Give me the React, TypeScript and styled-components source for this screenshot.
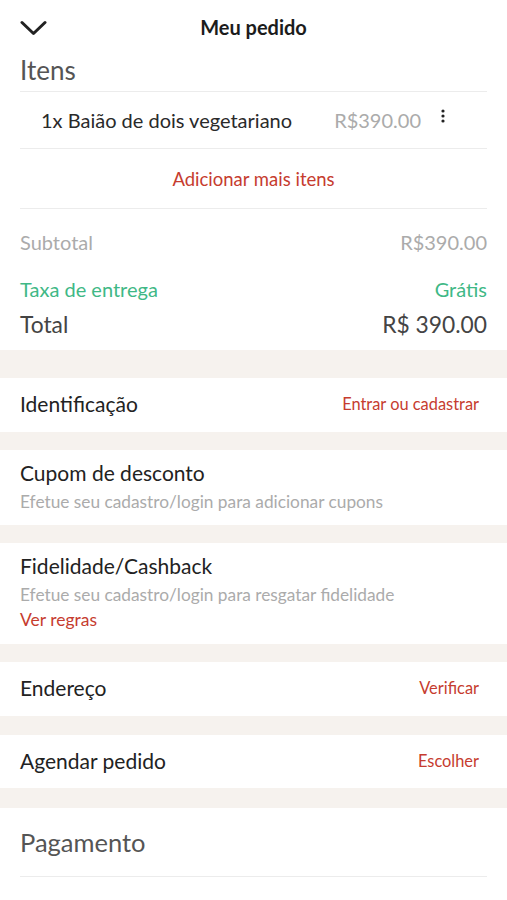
import React from "react";
import styled, { createGlobalStyle } from "styled-components";

const GlobalStyle = createGlobalStyle`
  html, body { margin: 0; padding: 0; background: #fff; }
  body { font-family: Lato, "Noto Sans", sans-serif; color: #2a2a2a; -webkit-font-smoothing: antialiased; }
  * { box-sizing: border-box; }
`;

const RED = "#c63c2f";
const GREEN = "#3fb886";
const GRAY = "#ababab";
const BAND = "#f6f2ee";

const Page = styled.div`
  width: 507px;
  height: 900px;
  overflow: hidden;
  background: #fff;
  display: flex;
  flex-direction: column;
`;

const Header = styled.header`
  height: 56px;
  flex: none;
  display: grid;
  grid-template-columns: 60px 1fr 60px;
  align-items: center;
  padding: 0 0 0 20px;
`;

const BackButton = styled.button`
  border: 0;
  background: none;
  padding: 0;
  width: 28px;
  height: 20px;
  display: flex;
  align-items: center;
  justify-content: flex-start;
  cursor: pointer;
`;

const HeaderTitle = styled.h1`
  margin: 0;
  text-align: center;
  font-size: 20px;
  font-weight: 700;
  color: #1c1c1c;
  transform: translateX(-10px) translateY(-1px);
`;

const Section = styled.section`
  padding: 0 20px;
  flex: none;
`;

const SectionTitle = styled.h2<{ $h: number; $size: number; $pb: number }>`
  margin: 0;
  height: ${(p) => p.$h}px;
  padding-bottom: ${(p) => p.$pb}px;
  display: flex;
  align-items: center;
  font-size: ${(p) => p.$size}px;
  font-weight: 400;
  color: #555;
`;

const Divider = styled.div`
  height: 1px;
  background: #ececec;
`;

const ItemRow = styled.div`
  height: 56px;
  display: flex;
  align-items: center;
  padding: 0 0 0 21px;
`;

const ItemName = styled.span`
  flex: 1;
  font-size: 20px;
  color: #2a2a2a;
`;

const ItemPrice = styled.span`
  font-size: 20px;
  color: ${GRAY};
`;

const MenuDots = styled.span`
  width: 66px;
  display: flex;
  justify-content: flex-start;
  padding-left: 20px;
  margin-top: -8px;
`;

const AddRow = styled.div`
  height: 59px;
  display: flex;
  align-items: center;
  justify-content: center;
  font-size: 18.5px;
  color: ${RED};
`;

const Totals = styled.div`
  padding: 15px 0 20px;
  display: flex;
  flex-direction: column;
`;

const TotalLine = styled.div<{ $color: string; $size: number; $h: number }>`
  height: ${(p) => p.$h}px;
  display: flex;
  align-items: center;
  justify-content: space-between;
  color: ${(p) => p.$color};
  font-size: ${(p) => p.$size}px;
`;

const Band = styled.div<{ $h: number }>`
  height: ${(p) => p.$h}px;
  background: ${BAND};
  flex: none;
`;

const Row = styled.div<{ $h: number }>`
  height: ${(p) => p.$h}px;
  flex: none;
  display: flex;
  align-items: center;
  justify-content: space-between;
  padding: 0 28px 3px 20px;
`;

const RowLabel = styled.span`
  font-size: 21px;
  color: #222;
`;

const RowAction = styled.span`
  font-size: 16.4px;
  color: ${RED};
`;

const Block = styled.div<{ $h: number }>`
  height: ${(p) => p.$h}px;
  flex: none;
  display: flex;
  flex-direction: column;
  justify-content: flex-start;
  padding: 10px 20px 0;
`;

const BlockTitle = styled.div`
  font-size: 21px;
  color: #222;
  line-height: 26px;
`;

const BlockSub = styled.div`
  font-size: 17.3px;
  color: ${GRAY};
  line-height: 22px;
  margin-top: 5px;
`;

const BlockLink = styled.div`
  font-size: 17.5px;
  color: ${RED};
  line-height: 22px;
  margin-top: 3px;
`;

const PayRow = styled.div`
  height: 46px;
  flex: none;
  display: flex;
  align-items: flex-end;
  justify-content: space-between;
  padding: 0 28px 0 20px;
`;

export default function App() {
  return (
    <Page>
      <GlobalStyle />
      <Header>
        <BackButton aria-label="Voltar">
          <svg width="27" height="16" viewBox="0 0 27 16">
            <path d="M2 2.5 L13.5 13.5 L25 2.5" fill="none" stroke="#222" strokeWidth="3" strokeLinecap="round" strokeLinejoin="round" />
          </svg>
        </BackButton>
        <HeaderTitle>Meu pedido</HeaderTitle>
        <span />
      </Header>

      <Section>
        <SectionTitle $h={35} $size={26} $pb={7}>Itens</SectionTitle>
        <Divider />
        <ItemRow>
          <ItemName>1x Baião de dois vegetariano</ItemName>
          <ItemPrice>R$390.00</ItemPrice>
          <MenuDots>
            <svg width="4" height="14" viewBox="0 0 4 14">
              <circle cx="2" cy="2" r="1.6" fill="#222" />
              <circle cx="2" cy="7" r="1.6" fill="#222" />
              <circle cx="2" cy="12" r="1.6" fill="#222" />
            </svg>
          </MenuDots>
        </ItemRow>
        <Divider />
        <AddRow>Adicionar mais itens</AddRow>
        <Divider />
        <Totals>
          <TotalLine $color={GRAY} $size={20} $h={36}>
            <span>Subtotal</span>
            <span>R$390.00</span>
          </TotalLine>
          <TotalLine $color={GREEN} $size={20} $h={58}>
            <span>Taxa de entrega</span>
            <span>Grátis</span>
          </TotalLine>
          <TotalLine $color="#444" $size={22.8} $h={12}>
            <span>Total</span>
            <span>R$ 390.00</span>
          </TotalLine>
        </Totals>
      </Section>

      <Band $h={28} />
      <Row $h={54}>
        <RowLabel>Identificação</RowLabel>
        <RowAction>Entrar ou cadastrar</RowAction>
      </Row>
      <Band $h={18} />
      <Block $h={75}>
        <BlockTitle>Cupom de desconto</BlockTitle>
        <BlockSub>Efetue seu cadastro/login para adicionar cupons</BlockSub>
      </Block>
      <Band $h={18} />
      <Block $h={101}>
        <BlockTitle>Fidelidade/Cashback</BlockTitle>
        <BlockSub>Efetue seu cadastro/login para resgatar fidelidade</BlockSub>
        <BlockLink>Ver regras</BlockLink>
      </Block>
      <Band $h={18} />
      <Row $h={54}>
        <RowLabel>Endereço</RowLabel>
        <RowAction>Verificar</RowAction>
      </Row>
      <Band $h={19} />
      <Row $h={53}>
        <RowLabel>Agendar pedido</RowLabel>
        <RowAction>Escolher</RowAction>
      </Row>
      <Band $h={20} />
      <Section>
        <SectionTitle $h={68} $size={25.5} $pb={0}>Pagamento</SectionTitle>
        <Divider />
      </Section>
      <PayRow>
        <RowLabel>Selecionar</RowLabel>
        <RowAction>Selecionar</RowAction>
      </PayRow>
    </Page>
  );
}
